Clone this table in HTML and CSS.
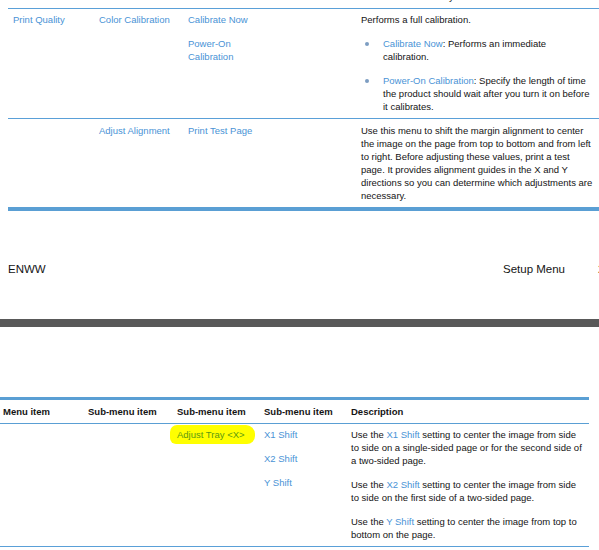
FILE: index.html
```html
<!DOCTYPE html>
<html lang="en">
<head>
<meta charset="utf-8">
<title>Setup Menu</title>
<link rel="stylesheet" href="styles.css">
</head>
<body>
<div class="page page-one">
  <div class="prev-row"><span class="prev-text">y</span></div>
  <div class="menu-table t1">
    <div class="row">
      <div class="cell link">Print Quality</div>
      <div class="cell link">Color Calibration</div>
      <div class="cell">
        <p class="link">Calibrate Now</p>
        <p class="link">Power-On<br>Calibration</p>
      </div>
      <div class="cell desc">
        <p>Performs a full calibration.</p>
        <ul class="bullets">
          <li><span class="link">Calibrate Now</span>: Performs an immediate<br>calibration.</li>
          <li><span class="link">Power-On Calibration</span>: Specify the length of time<br>the product should wait after you turn it on before<br>it calibrates.</li>
        </ul>
      </div>
    </div>
    <div class="row last">
      <div class="cell"></div>
      <div class="cell link">Adjust Alignment</div>
      <div class="cell link">Print Test Page</div>
      <div class="cell desc">
        <p>Use this menu to shift the margin alignment to center<br>the image on the page from top to bottom and from left<br>to right. Before adjusting these values, print a test<br>page. It provides alignment guides in the X and Y<br>directions so you can determine which adjustments are<br>necessary.</p>
      </div>
    </div>
  </div>
  <div class="footer">
    <span class="footer-left">ENWW</span>
    <span class="footer-right">Setup Menu<span class="page-num">2</span></span>
  </div>
</div>
<div class="page-gap"></div>
<div class="page page-two">
  <div class="menu-table t2">
    <div class="row head">
      <div class="cell">Menu item</div>
      <div class="cell">Sub-menu item</div>
      <div class="cell">Sub-menu item</div>
      <div class="cell">Sub-menu item</div>
      <div class="cell">Description</div>
    </div>
    <div class="row">
      <div class="cell"></div>
      <div class="cell"></div>
      <div class="cell"><span class="highlight">Adjust Tray &lt;X&gt;</span></div>
      <div class="cell">
        <p class="link">X1 Shift</p>
        <p class="link">X2 Shift</p>
        <p class="link">Y Shift</p>
      </div>
      <div class="cell desc">
        <p>Use the <span class="link">X1 Shift</span> setting to center the image from side<br>to side on a single-sided page or for the second side of<br>a two-sided page.</p>
        <p>Use the <span class="link">X2 Shift</span> setting to center the image from side<br>to side on the first side of a two-sided page.</p>
        <p>Use the <span class="link">Y Shift</span> setting to center the image from top to<br>bottom on the page.</p>
      </div>
    </div>
  </div>
</div>
</body>
</html>
```

FILE: styles.css
```css
html, body {
  margin: 0;
  padding: 0;
  background: #ffffff;
}

body {
  width: 599px;
  overflow: hidden;
  font-family: "Liberation Sans", Arial, sans-serif;
  font-size: 9.5px;
  line-height: 13px;
  color: #141414;
}

p {
  margin: 0;
}

p + p {
  margin-top: 11px;
}

.link {
  color: #4a93d6;
}

.page {
  box-sizing: border-box;
}

.page-one {
  height: 319px;
  padding-left: 8px;
  width: 640px;
}

.prev-row {
  height: 8px;
  overflow: hidden;
}

.prev-text {
  display: block;
  margin-top: -10px;
  padding-left: 441px;
  line-height: 13px;
}

.menu-table .row {
  display: grid;
}

.t1 {
  border-top: 1px solid #5aa0d8;
}

.t1 .row {
  grid-template-columns: 86px 89px 173px 290px;
  border-bottom: 1px solid #5aa0d8;
}

.t1 .row.last {
  border-bottom: 4px solid #5a9fd4;
}

.t1 .cell {
  padding: 4px 5px 5px 5px;
}

.t1 .row.last .cell {
  padding-top: 5px;
  padding-bottom: 5px;
}

.bullets {
  list-style: none;
  margin: 11px 0 0 0;
  padding: 0 0 0 22px;
}

.bullets li {
  position: relative;
}

.bullets li + li {
  margin-top: 11px;
}

.bullets li::before {
  content: "";
  position: absolute;
  left: -18px;
  top: 5px;
  width: 4px;
  height: 4px;
  border-radius: 50%;
  background: #7d9dc2;
}

.footer {
  display: flex;
  margin-top: 51px;
  font-size: 11.5px;
  line-height: 14px;
  color: #141414;
}

.footer-left {
  width: 495px;
}

.page-num {
  margin-left: 33px;
}

.page-gap {
  height: 8px;
  background: #595959;
}

.page-two {
  padding-top: 70px;
  width: 599px;
}

.t2 {
  width: 589px;
  border-top: 3px solid #5a9fd4;
}

.t2 .row {
  grid-template-columns: 85px 89px 87px 87px 241px;
  border-bottom: 1px solid #5aa0d8;
}

.t2 .row.head {
  font-weight: bold;
  border-bottom: 1px solid #5a9fd4;
}

.t2 .row.head .cell {
  padding: 5px 3px 5px 3px;
}

.t2 .cell {
  padding: 4px 3px 5px 3px;
}

.t1 .desc,
.t2 .desc {
  white-space: nowrap;
}

.highlight {
  background: #ffff00;
  color: #5c9a12;
  padding: 4px 10px 4px 7px;
  margin-left: -7px;
  border-radius: 7px 9px 8px 6px;
}
```
